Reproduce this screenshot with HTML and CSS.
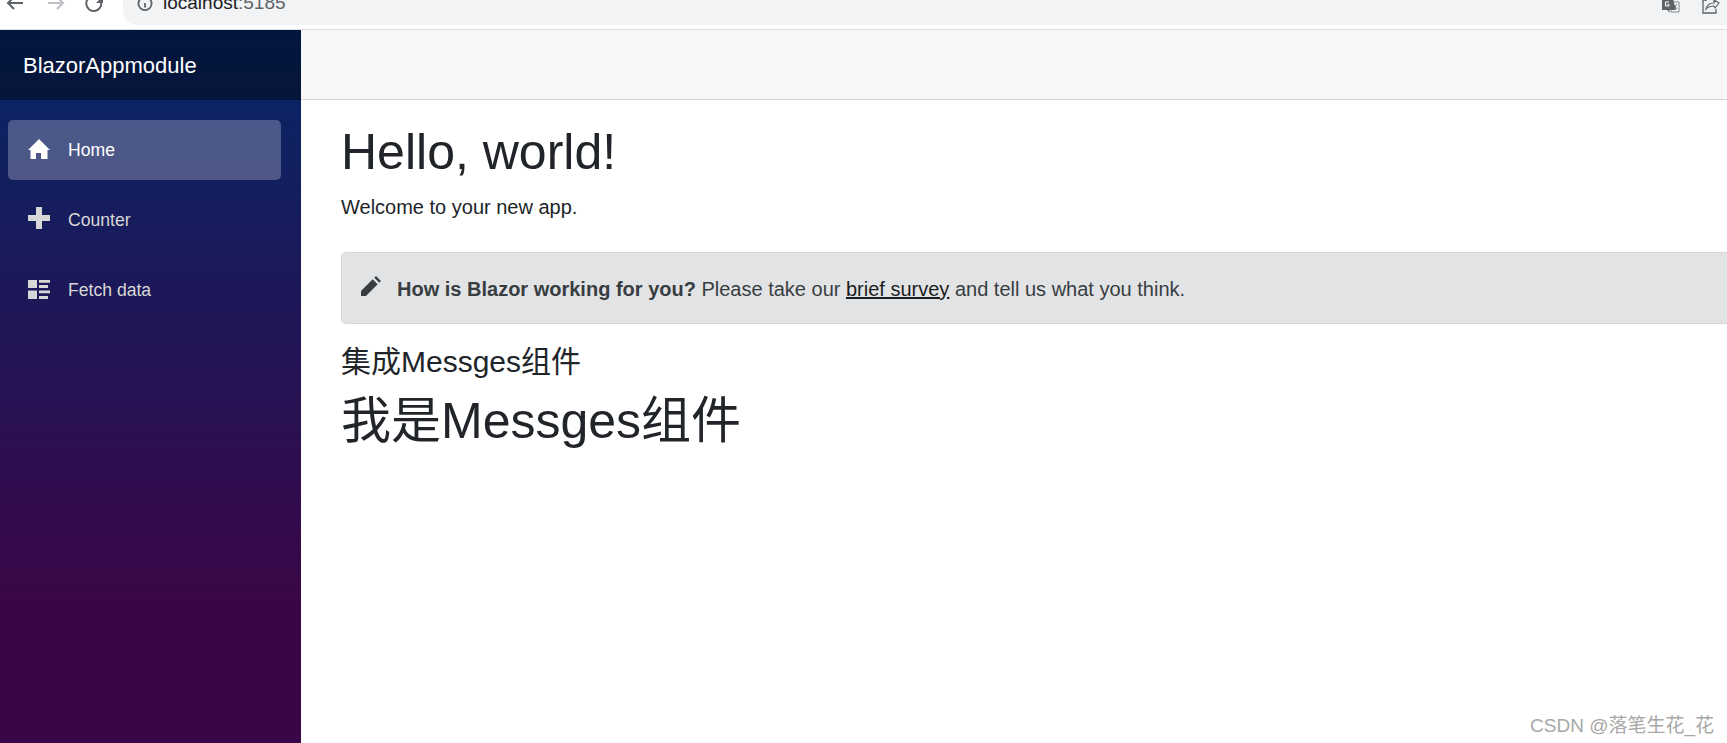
FILE: index.html
```html
<!DOCTYPE html>
<html lang="en">
<head>
<meta charset="utf-8">
<title>BlazorAppmodule</title>
<link rel="stylesheet" href="styles.css">
</head>
<body>
<header class="chrome">
  <div class="nav-buttons">
    <svg class="chrome-icon" viewBox="0 0 20 20"><path d="M18 3H3M9-3L3 3l6 6" fill="none" stroke="#5f6368" stroke-width="2"/></svg>
    <svg class="chrome-icon" viewBox="0 0 20 20"><path d="M3 3h15M12-3l6 6-6 6" fill="none" stroke="#bcbfc3" stroke-width="2"/></svg>
    <svg class="chrome-icon" viewBox="0 0 20 20"><path d="M16 1.500A7.500 7.500 0 1 1 9.500-4" fill="none" stroke="#5f6368" stroke-width="2"/><path d="M11 3h7V-4z" fill="#5f6368"/></svg>
  </div>
  <div class="omnibox">
    <svg class="info-icon" viewBox="0 0 16 16"><circle cx="8" cy="3.500" r="6.600" fill="none" stroke="#5f6368" stroke-width="1.800"/><path d="M8 3v4.500" stroke="#5f6368" stroke-width="1.800"/></svg>
    <span class="url">localhost<span class="url-port">:5185</span></span>
    <span class="omni-spacer"></span>
    <svg class="omni-icon" viewBox="0 0 18 14"><path d="M9 2h8v10H9z" fill="#f8f9fa" stroke="#80868b"/><path d="M0-2h11l1 5 2 7H7l1 3-3-3H0z" fill="#5f6368"/><path d="M7 2H3.500v4H7V4.500H5.500" fill="none" stroke="#fff"/><path d="M11 4l4 5M15 4l-4 5" stroke="#5f6368"/></svg>
    <svg class="omni-icon" viewBox="0 0 18 14"><path d="M5 0H1v13h13V9" fill="none" stroke="#5f6368" stroke-width="1.300"/><path d="M4 9c1-4 4-6 8-6V0l5 3-4 5-1-2c-3 0-6 1-8 3z" fill="none" stroke="#5f6368" stroke-width="1.200"/></svg>
  </div>
</header>
<div class="chrome-gap"></div>
<div class="page">
  <aside class="sidebar">
    <div class="brand">BlazorAppmodule</div>
    <nav class="nav">
      <a class="nav-link active">
        <svg class="nav-icon" viewBox="0 0 22 22"><path d="M11 2L0 13h2.500v9H8v-6h5v6h6.500v-9H22z" fill="currentColor"/></svg>
        Home
      </a>
      <a class="nav-link">
        <svg class="nav-icon" viewBox="0 0 22 22"><path d="M8 0h6v8h8v6h-8v8H8v-8H0V8h8z" fill="currentColor"/></svg>
        Counter
      </a>
      <a class="nav-link">
        <svg class="nav-icon" viewBox="0 0 22 22"><path d="M0 3h9v8H0zM0 13.500h9V22H0zM11 3h11v2.700H11zM11 8h9v3h-9zM11 13.500h11v2.800H11zM11 19h9v3h-9z" fill="currentColor"/></svg>
        Fetch data
      </a>
    </nav>
  </aside>
  <main class="main">
    <div class="top-row"></div>
    <article class="content">
      <h1 class="title">Hello, world!</h1>
      <p class="welcome">Welcome to your new app.</p>
      <div class="alert">
        <svg class="alert-icon" viewBox="0 0 24 24"><path d="M0 24v-6L14 4l6 6L6 24zM16 2l2-2 6 6-2 2z" fill="currentColor"/></svg>
        <span><strong>How is Blazor working for you?</strong> Please take our <a class="survey">brief survey</a> and tell us what you think.</span>
      </div>
      <h3 class="sub">集成Messges组件</h3>
      <h1 class="big">我是Messges组件</h1>
    </article>
  </main>
</div>
<div class="watermark">CSDN @落笔生花_花</div>
</body>
</html>
```
FILE: styles.css
```css
html, body {
  margin: 0;
  padding: 0;
  height: 743px;
  overflow: hidden;
  background: #fff;
  font-family: "Liberation Sans", "Noto Sans CJK SC", sans-serif;
  color: #212529;
}
.chrome {
  height: 25px;
  display: flex;
  background: #fff;
  overflow: hidden;
}
.nav-buttons {
  width: 123px;
  display: flex;
  gap: 20px;
  padding-left: 5px;
  box-sizing: border-box;
}
.chrome-icon {
  width: 20px;
  height: 20px;
  flex: none;
  overflow: hidden;
}
.omnibox {
  flex: 1;
  height: 25px;
  background: #f1f3f4;
  border-bottom-left-radius: 14px;
  display: flex;
  align-items: flex-start;
  padding-left: 14px;
  padding-right: 7px;
}
.info-icon {
  width: 16px;
  height: 16px;
  flex: none;
}
.url {
  font-size: 19px;
  line-height: 19px;
  margin-top: -7px;
  margin-left: 10px;
  color: #202124;
}
.url-port { color: #5f6368; }
.omni-spacer { flex: 1; }
.omni-icon {
  width: 18px;
  height: 14px;
  margin-left: 22px;
  flex: none;
}
.chrome-gap {
  height: 4px;
  background: #fff;
  border-bottom: 1px solid #dadce0;
}
.page {
  display: flex;
  height: 713px;
}
.sidebar {
  width: 301px;
  flex: none;
  background: linear-gradient(180deg, #052767 0%, #3a0647 80%);
}
.brand {
  height: 70px;
  background: rgba(0, 0, 0, .4);
  color: #fff;
  font-size: 22px;
  line-height: 72px;
  padding-left: 23px;
}
.nav {
  display: flex;
  flex-direction: column;
  padding-top: 20px;
  padding-left: 8px;
  padding-right: 20px;
  gap: 10px;
}
.nav-link {
  height: 60px;
  display: flex;
  align-items: center;
  border-radius: 5px;
  padding-left: 20px;
  font-size: 17.6px;
  color: #d7d7d7;
}
.nav-link.active {
  background: rgba(255, 255, 255, .25);
  color: #fff;
}
.nav-icon {
  width: 22px;
  height: 22px;
  margin-right: 18px;
  margin-bottom: 4px;
  flex: none;
}
.main {
  flex: 1;
  min-width: 0;
}
.top-row {
  height: 69px;
  background: #f7f7f7;
  border-bottom: 1px solid #d6d5d5;
}
.content {
  padding-left: 40px;
  padding-top: 23px;
}
.title {
  margin: 0;
  font-size: 50px;
  font-weight: 400;
  line-height: 58px;
}
.welcome {
  margin: 11px 0 0;
  font-size: 20px;
  line-height: 30px;
}
.alert {
  margin-top: 30px;
  height: 72px;
  box-sizing: border-box;
  background: #e2e3e5;
  border: 1px solid #d6d8db;
  border-right: 0;
  border-radius: 5px 0 0 5px;
  display: flex;
  align-items: center;
  padding-left: 19px;
  padding-top: 2px;
  font-size: 20px;
  color: #383d41;
}
.alert-icon {
  width: 20px;
  height: 20px;
  margin-right: 16px;
  margin-bottom: 6px;
  flex: none;
}
.survey {
  color: #1b1e21;
  text-decoration: underline;
}
.sub {
  margin: 19px 0 0;
  font-size: 30px;
  font-weight: 400;
  line-height: 38px;
}
.big {
  margin: 8px 0 0;
  font-size: 50px;
  font-weight: 400;
  line-height: 64px;
}
.watermark {
  position: absolute;
  right: 13px;
  top: 714px;
  font-size: 19px;
  line-height: 24px;
  color: #a8a8a8;
}
```
